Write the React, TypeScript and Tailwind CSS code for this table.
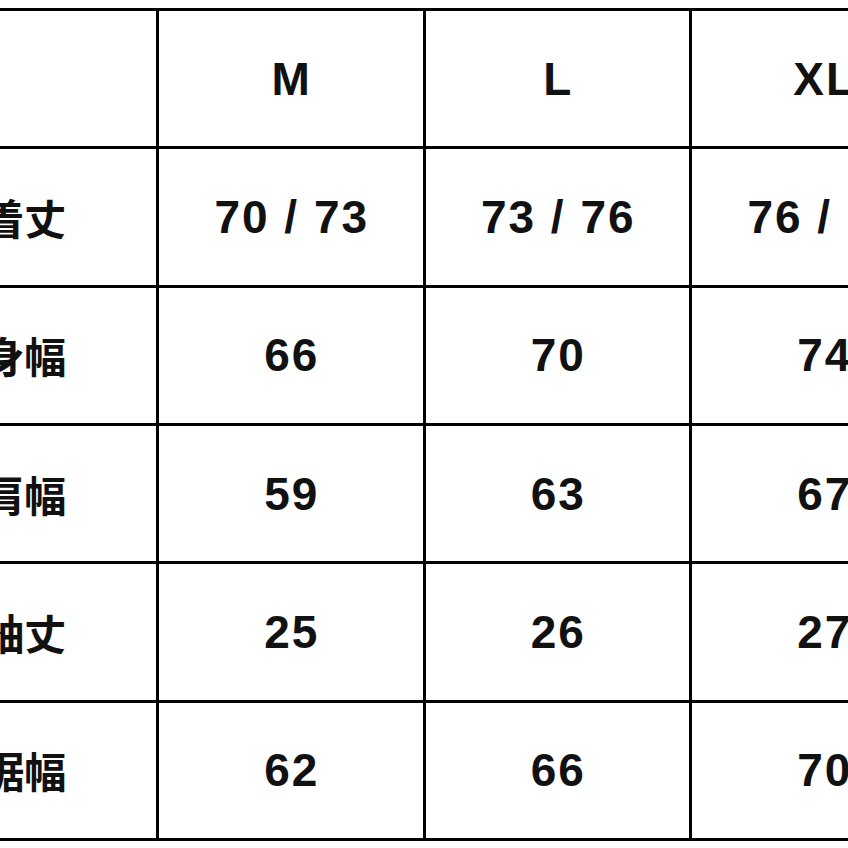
import React from "react";

const headers = ["", "M", "L", "XL"];
const rows: [string, string, string, string][] = [
  ["着丈", "70 / 73", "73 / 76", "76 / 79"],
  ["身幅", "66", "70", "74"],
  ["肩幅", "59", "63", "67"],
  ["袖丈", "25", "26", "27"],
  ["裾幅", "62", "66", "70"],
];

function Cell({ children, cjk }: { children: React.ReactNode; cjk?: boolean }) {
  return (
    <div className="bg-white flex items-center justify-center overflow-hidden">
      {cjk ? (
        <span
          className="text-[42px] font-bold text-[#111] leading-none whitespace-nowrap"
          style={{ fontFamily: '"Noto Sans CJK JP", "Noto Sans", sans-serif' }}
        >
          {children}
        </span>
      ) : (
        <span
          className="text-[46px] font-bold text-[#111] leading-none tracking-[2px] pl-[2px] whitespace-nowrap"
          style={{ fontFamily: '"Liberation Sans", Arial, "Noto Sans CJK JP", sans-serif' }}
        >
          {children}
        </span>
      )}
    </div>
  );
}

export default function App() {
  return (
    <div className="w-[848px] h-[848px] overflow-hidden bg-white pt-[8px]">
      <div className="ml-[-110.5px] w-max grid grid-cols-[repeat(4,263.5px)] grid-rows-[repeat(6,135.33px)] gap-[3px] p-[3px] bg-black">
        {headers.map((h, i) => (
          <Cell key={"h" + i}>{h}</Cell>
        ))}
        {rows.map((r, ri) =>
          r.map((c, ci) => (
            <Cell key={ri + "-" + ci} cjk={ci === 0}>
              {c}
            </Cell>
          ))
        )}
      </div>
    </div>
  );
}
